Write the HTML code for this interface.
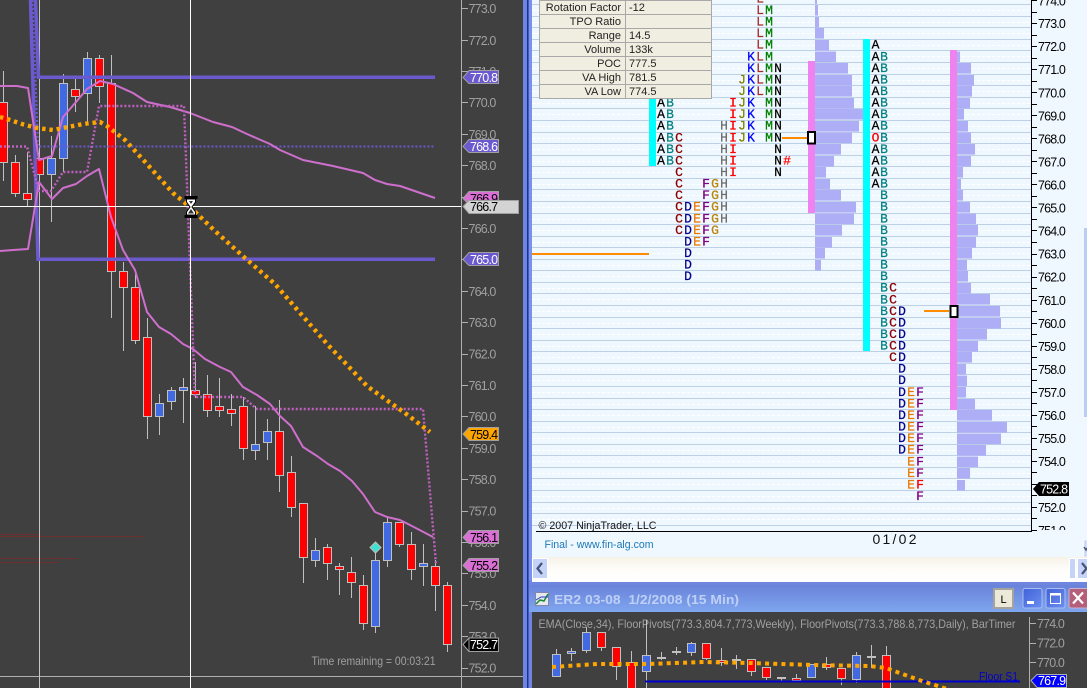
<!DOCTYPE html>
<html><head><meta charset="utf-8"><title>ER2 03-08 chart</title>
<style>
html,body{margin:0;padding:0;width:1087px;height:688px;overflow:hidden;background:#404040}
svg{display:block;position:absolute;left:0;top:0}
text{font-family:"Liberation Sans",sans-serif}
.ax{font-size:12.5px;fill:#a0a0a0;letter-spacing:-.85px}
.rx{font-size:12.5px;fill:#000;letter-spacing:-.85px}
.lb{font-size:12.5px;letter-spacing:-.8px}
.t{font-size:11px;fill:#222}
.m text{font-family:"Liberation Mono",monospace;font-size:13px;text-anchor:middle;font-weight:normal;stroke-width:.25px;paint-order:stroke}
</style></head><body>
<svg width="1087" height="688" viewBox="0 0 1087 688" xmlns="http://www.w3.org/2000/svg">
<defs><linearGradient id="tb" x1="0" y1="0" x2="0" y2="1"><stop offset="0" stop-color="#6a82da"/><stop offset="1" stop-color="#7fa6ee"/></linearGradient>
<linearGradient id="sb" x1="0" y1="0" x2="0" y2="1"><stop offset="0" stop-color="#f6f2e8"/><stop offset=".5" stop-color="#fdfcf8"/><stop offset="1" stop-color="#fff"/></linearGradient>
<linearGradient id="bt" x1="0" y1="0" x2="1" y2="1"><stop offset="0" stop-color="#3f62d8"/><stop offset="1" stop-color="#6d8ef0"/></linearGradient></defs>

<!-- LEFT CHART -->
<rect width="523" height="688" fill="#404040"/>
<g stroke="#6b3030" stroke-width="1" fill="none"><path d="M0 534.5H40M0 536.5H143M0 558.5H78M0 562.5H59"/></g>
<path d="M0 676.5H523M461.5 0V688" stroke="#b0b0b0" fill="none"/>
<path d="M39.5 0V688" stroke="#c8c8c8" fill="none"/>
<path stroke="#c0c0c0" fill="none" d="M3.5 71V181M15.5 155V197M27.5 152V206M51.5 136V222M63.5 74V172M75.5 79V112M87.5 52V123M99.5 55V103M111.5 55V318M123.5 262V351M135.5 270V344M147.5 318V439M159.5 394V435M171.5 387V410M183.5 378V423M195.5 362V398M207.5 375V417M219.5 378V417M231.5 394V426M243.5 397V460M255.5 406V460M267.5 419V460M279.5 400V492M291.5 456V517M303.5 503V583M315.5 538V567M327.5 544V580M339.5 563V595M351.5 557V598M363.5 575V630M375.5 552V633M387.5 516V567M399.5 522V547M411.5 532V580M423.5 544V586M435.5 560V611M447.5 582V652"/>
<path fill="#ff0000" stroke="#c0c0c0" d="M-.5 102.5h8V162.5h-8zM11.5 162.5h8V193.5h-8zM23.5 193.5h8V199.5h-8zM35.5 158.5h8V174.5h-8zM71.5 89.5h8V96.5h-8zM95.5 58.5h8V86.5h-8zM107.5 83.5h8V271.5h-8zM119.5 271.5h8V287.5h-8zM131.5 287.5h8V340.5h-8zM143.5 337.5h8V416.5h-8zM191.5 390.5h8V394.5h-8zM203.5 394.5h8V410.5h-8zM215.5 406.5h8V410.5h-8zM227.5 409.5h8V413.5h-8zM239.5 406.5h8V448.5h-8zM275.5 431.5h8V475.5h-8zM287.5 472.5h8V507.5h-8zM299.5 503.5h8V557.5h-8zM323.5 547.5h8V563.5h-8zM335.5 566.5h8V569.5h-8zM347.5 572.5h8V582.5h-8zM359.5 585.5h8V623.5h-8zM395.5 522.5h8V544.5h-8zM407.5 544.5h8V569.5h-8zM431.5 566.5h8V585.5h-8zM443.5 585.5h8V644.5h-8z"/>
<path fill="#4169e1" stroke="#c0c0c0" d="M47.5 158.5h8V174.5h-8zM59.5 83.5h8V158.5h-8zM83.5 58.5h8V93.5h-8zM155.5 403.5h8V416.5h-8zM167.5 390.5h8V401.5h-8zM179.5 387.5h8V390.5h-8zM251.5 444.5h8V450.5h-8zM263.5 431.5h8V442.5h-8zM311.5 550.5h8V560.5h-8zM371.5 560.5h8V626.5h-8zM383.5 522.5h8V560.5h-8zM419.5 563.5h8V566.5h-8z"/>
<path d="M375.5 542L381 547.5L375.5 553L370 547.5Z" fill="#40e0d0" stroke="#c0c0c0"/>
<!-- purple pivots -->
<g fill="none" stroke="#6a5acd">
<path stroke-width="3.5" d="M435 77.3H38.5L35.5 0M435 259.3H38L30.5 0"/>
<path stroke-width="2" stroke-dasharray="2 2" d="M32.5 0L38 146.5H435"/>
</g>
<!-- pink -->
<g fill="none" stroke="#cf6fcd" stroke-width="2" stroke-linejoin="round">
<path d="M0 86L17 86L28 88L39 160L52 156L63 117L76 102L87 89L100 81L113 84L133 93L147 102L170 107L190 113L213 122L232 127L247 134L270 144L280 150L303 160L333 166L363 173L375 180L387 184L400 186L435 198"/>
<path d="M0 251L13 250L28 249L39 182L52 199L63 188L76 184L87 176L99 169L111 217L123 250L135 270L147 312L159 327L171 334L183 344L193 349L205 359L220 367L231 372L243 387L257 395L270 404L280 416L291 426L303 447L317 456L328 464L340 471L352 481L363 494L375 512L387 517L400 520L410 525L433 537"/>
<path stroke="#c060c0" stroke-width="2.4" stroke-dasharray="2 2" d="M0 146.5H27L39 191H51L63 172H87L99 106H184L193 344L195 397H243L257 409H423L436 564"/>
</g>
<!-- EMA -->
<path fill="none" stroke="#ffa500" stroke-width="4.4" stroke-dasharray="3.4 3.9" d="M0 117L7 119L22 124L37 128L53 130L68 127L83 124L100 122L107 126L125 140L147 164L173 193L190 207L215 231L245 258L268 278L275 284L307 321L328 345L350 368L367 386L385 399L405 413L430 432"/>
<!-- crosshair -->
<path d="M0 206.5H461M190.5 0V688" stroke="#fff" fill="none"/>
<!-- hourglass -->
<g>
<rect x="184.5" y="196" width="13" height="3" fill="#000"/><rect x="184.5" y="215" width="13" height="3" fill="#000"/>
<path d="M186.5 199H195.5V202L192 207L195.5 212V215H186.5V212L190 207L186.5 202Z" fill="#fff" stroke="#000"/>
<path d="M188 213.5L191 209L194 213.5ZM189 201H193L191 204Z" fill="#333"/>
</g>
<!-- axis -->
<path stroke="#b0b0b0" fill="none" d="M461 8.5h7M461 40.5h7M461 71.5h7M461 102.5h7M461 134.5h7M461 165.5h7M461 197.5h7M461 228.5h7M461 259.5h7M461 291.5h7M461 322.5h7M461 354.5h7M461 385.5h7M461 416.5h7M461 448.5h7M461 479.5h7M461 511.5h7M461 542.5h7M461 573.5h7M461 605.5h7M461 636.5h7M461 668.5h7"/>
<g class="ax">
<text x="468.500" y="13">773.0</text><text x="468.500" y="45">772.0</text><text x="468.500" y="76">771.0</text><text x="468.500" y="107">770.0</text><text x="468.500" y="139">769.0</text><text x="468.500" y="170">768.0</text><text x="468.500" y="202">767.0</text><text x="468.500" y="233">766.0</text><text x="468.500" y="264">765.0</text><text x="468.500" y="296">764.0</text><text x="468.500" y="327">763.0</text><text x="468.500" y="358.500">762.0</text><text x="468.500" y="390">761.0</text><text x="468.500" y="421">760.0</text><text x="468.500" y="453">759.0</text><text x="468.500" y="484">758.0</text><text x="468.500" y="515.500">757.0</text><text x="468.500" y="547">756.0</text><text x="468.500" y="578">755.0</text><text x="468.500" y="610">754.0</text><text x="468.500" y="641">753.0</text><text x="468.500" y="672.500">752.0</text>
<text x="311.500" y="665" textLength="124" lengthAdjust="spacingAndGlyphs" style="font-size:12px;letter-spacing:0">Time remaining = 00:03:21</text>
</g>
<!-- labels -->
<g stroke="#a0a0a0" class="lb">
<path fill="#6a5acd" d="M463 77.500L469 70.500H498.500V83.500H469Z"/>
<path fill="#6a5acd" d="M463 146.500L469 139.500H498.500V152.500H469Z"/>
<path fill="#da70d6" d="M463 198.500L469 191.500H498.500V204.500H469Z"/>
<path fill="#d3d3d3" d="M463 206.500L469 200.500H518.500V213.500H469Z"/>
<path fill="#6a5acd" d="M463 259.500L469 252.500H498.500V265.500H469Z"/>
<path fill="#ffa500" d="M463 434L469 427.500H498.500V440.500H469Z"/>
<path fill="#da70d6" d="M463 537.500L469 530.500H498.500V543.500H469Z"/>
<path fill="#da70d6" d="M463 565.500L469 558.500H498.500V571.500H469Z"/>
<path fill="#000" d="M463 644.500L469 638V651.500V638H498.500V651.500H469Z"/>
</g>
<g class="lb">
<text x="470" y="82" fill="#fff">770.8</text><text x="470" y="151" fill="#fff">768.6</text>
<clipPath id="c1"><rect x="463" y="190" width="36" height="10"/></clipPath>
<text x="470" y="203" fill="#000" clip-path="url(#c1)">766.9</text>
<text x="470" y="211" fill="#000">766.7</text><text x="470" y="264" fill="#fff">765.0</text>
<text x="470" y="439" fill="#000">759.4</text><text x="470" y="542" fill="#000">756.1</text><text x="470" y="570" fill="#000">755.2</text><text x="470" y="649" fill="#fff">752.7</text>
</g>

<!-- WINDOW FRAME -->
<rect x="523" y="0" width="564" height="688" fill="#6f86e0"/>
<rect x="527" y="0" width="1.500" height="688" fill="#1c2f9c"/>
<rect x="529" y="0" width="3" height="580" fill="#7b92ea"/>
<!-- RIGHT CHART -->
<rect x="532" y="0" width="555" height="557" fill="#f0f8ff"/>
<path stroke="#fff" stroke-dasharray="3 2" fill="none" d="M532 10.500H1031M532 22.500H1031M532 33.500H1031M532 45.500H1031M532 56.500H1031M532 68.500H1031M532 80.500H1031M532 91.500H1031M532 103.500H1031M532 114.500H1031M532 126.500H1031M532 138.500H1031M532 149.500H1031M532 161.500H1031M532 172.500H1031M532 184.500H1031M532 195.500H1031M532 207.500H1031M532 219.500H1031M532 230.500H1031M532 242.500H1031M532 253.500H1031M532 265.500H1031M532 276.500H1031M532 288.500H1031M532 299.500H1031M532 311.500H1031M532 323.500H1031M532 334.500H1031M532 346.500H1031M532 357.500H1031M532 369.500H1031M532 380.500H1031M532 392.500H1031M532 404.500H1031M532 415.500H1031M532 427.500H1031M532 438.500H1031M532 450.500H1031M532 461.500H1031M532 473.500H1031M532 484.500H1031M532 496.500H1031M532 508.500H1031M532 519.500H1031"/>
<path stroke="#bdd0e6" fill="none" d="M532 4.500H1031M532 16.500H1031M532 27.500H1031M532 39.500H1031M532 50.500H1031M532 62.500H1031M532 74.500H1031M532 85.500H1031M532 97.500H1031M532 108.500H1031M532 120.500H1031M532 132.500H1031M532 143.500H1031M532 155.500H1031M532 166.500H1031M532 178.500H1031M532 189.500H1031M532 201.500H1031M532 213.500H1031M532 224.500H1031M532 236.500H1031M532 247.500H1031M532 259.500H1031M532 270.500H1031M532 282.500H1031M532 293.500H1031M532 305.500H1031M532 317.500H1031M532 328.500H1031M532 340.500H1031M532 351.500H1031M532 363.500H1031M532 374.500H1031M532 386.500H1031M532 398.500H1031M532 409.500H1031M532 421.500H1031M532 432.500H1031M532 444.500H1031M532 455.500H1031M532 467.500H1031M532 478.500H1031M532 490.500H1031M532 502.500H1031M532 513.500H1031M532 525.500H1031"/>
<!-- histogram 1 -->
<g fill="#aeaef6">
<path d="M815 0h2v4h-2zM815 5h3v10.600h-3zM815 17h4v10.600h-4zM815 28h9v10.600h-9zM815 40h14v10.600h-14zM815 51.500h21v10.600h-21zM815 63h33v10.600h-33zM815 75h37v10.600h-37zM815 86h37v10.600h-37zM815 98h39v10.600h-39zM815 109h48v10.600h-48zM815 121h44v10.600h-44zM815 132.500h37v10.600h-37zM815 144h26v10.600h-26zM815 156h19v10.600h-19zM815 167h11v10.600h-11zM815 179h15v10.600h-15zM815 190h26v10.600h-26zM815 202h41v10.600h-41zM815 213.500h39v10.600h-39zM815 225h27v10.600h-27zM815 237h17v10.600h-17zM815 248h10v10.600h-10zM815 260h6v10.600h-6z"/>
<path d="M957 51.500h3v10.600h-3zM957 63h14v10.600h-14zM957 75h17v10.600h-17zM957 86h15v10.600h-15zM957 98h13v10.600h-13zM957 109h7v10.600h-7zM957 121h11v10.600h-11zM957 132.500h14v10.600h-14zM957 144h18v10.600h-18zM957 156h14v10.600h-14zM957 167h6v10.600h-6zM957 179h4v10.600h-4zM957 190h6v10.600h-6zM957 202h13v10.600h-13zM957 213.500h19v10.600h-19zM957 225h21v10.600h-21zM957 237h19v10.600h-19zM957 248h15v10.600h-15zM957 260h10v10.600h-10zM957 271h11v10.600h-11zM957 283h14v10.600h-14zM957 294h33v10.600h-33zM957 306h43v10.600h-43zM957 318h44v10.600h-44zM957 329h30v10.600h-30zM957 341h21v10.600h-21zM957 352h15v10.600h-15zM957 364h9v10.600h-9zM957 375.500h10v10.600h-10zM957 387h9v10.600h-9zM957 399h18v10.600h-18zM957 410h35v10.600h-35zM957 422h50v10.600h-50zM957 433.500h44v10.600h-44zM957 445h29v10.600h-29zM957 456.500h21v10.600h-21zM957 468h13v10.600h-13zM957 480h8v10.600h-8z"/>
</g>
<rect x="649" y="90" width="7" height="76" fill="#00ffff"/>
<rect x="863" y="39" width="7" height="312" fill="#00ffff"/>
<rect x="808" y="61" width="7" height="152" fill="#ee82ee"/>
<rect x="950" y="50" width="7" height="360" fill="#ee82ee"/>
<path d="M532 254H649M782 138H807M924 311H949" stroke="#ff8c00" stroke-width="2" fill="none"/>
<rect x="808" y="132" width="7" height="11.500" fill="#fff" stroke="#000" stroke-width="2"/>
<rect x="950.500" y="306" width="7" height="11" fill="#fff" stroke="#000" stroke-width="2"/>
<!-- TPO letters chart 1 -->
<g class="m">
<text fill="#000" stroke="#000" x="661 661 661 661 661 661" y="106.600 118.100 129.700 141.300 152.900 164.400">AAAAAA</text>
<text fill="#008080" stroke="#008080" x="670 670 670 670 670 670" y="106.600 118.100 129.700 141.300 152.900 164.400">BBBBBB</text>
<text fill="#8b0000" stroke="#8b0000" x="679 679 679 679 679 679 679 679 679" y="141.300 152.900 164.400 176 187.600 199.200 210.700 222.300 233.800">CCCCCCCCC</text>
<text fill="#00008b" stroke="#00008b" x="688 688 688 688 688 688 688" y="210.700 222.300 233.800 245.400 257 268.500 280.100">DDDDDDD</text>
<text fill="#e87800" stroke="#e87800" x="697 697 697 697" y="210.700 222.300 233.800 245.400">EEEE</text>
<text fill="#800080" stroke="#800080" x="706 706 706 706 706 706" y="187.600 199.200 210.700 222.300 233.800 245.400">FFFFFF</text>
<text fill="#b8860b" stroke="#b8860b" x="715 715 715 715 715" y="187.600 199.200 210.700 222.300 233.800">GGGGG</text>
<text fill="#696969" stroke="#696969" x="724 724 724 724 724 724 724 724 724" y="129.700 141.300 152.900 164.400 176 187.600 199.200 210.700 222.300">HHHHHHHHH</text>
<text fill="#ff0000" stroke="#ff0000" x="733 733 733 733 733 733 733" y="106.600 118.100 129.700 141.300 152.900 164.400 176">IIIIIII</text>
<text fill="#808000" stroke="#808000" x="742 742 742 742 742 742" y="83.400 95 106.600 118.100 129.700 141.300">JJJJJJ</text>
<text fill="#0000ff" stroke="#0000ff" x="751 751 751 751 751 751 751 751" y="60.300 71.900 83.400 95 106.600 118.100 129.700 141.300">KKKKKKKK</text>
<text fill="#a52a2a" stroke="#a52a2a" x="760 760 760 760 760 760 760 760 760" y="2.400 14 25.600 37.100 48.700 60.300 71.900 83.400 95">LLLLLLLLL</text>
<text fill="#008000" stroke="#008000" x="769 769 769 769 769 769 769 769 769 769 769 769" y="14 25.600 37.100 48.700 60.300 71.900 83.400 95 106.600 118.100 129.700 141.300">MMMMMMMMMMMM</text>
<text fill="#000" stroke="#000" x="778 778 778 778 778 778 778 778 778 778" y="71.900 83.400 95 106.600 118.100 129.700 141.300 152.900 164.400 176">NNNNNNNNNN</text>
<text fill="#ff0000" stroke="#ff0000" x="787" y="164.400">#</text>
<!-- chart 2 -->
<text fill="#000" stroke="#000" x="875.500 875.500 875.500 875.500 875.500 875.500 875.500 875.500 875.500 875.500 875.500 875.500" y="48.700 60.300 71.900 83.400 95 106.600 118.100 129.700 152.900 164.400 176 187.600">AAAAAAAAAAAA</text>
<text fill="#ff0000" stroke="#ff0000" x="875.500" y="141.300">O</text>
<text fill="#008080" stroke="#008080" x="884 884 884 884 884 884 884 884 884 884 884 884 884 884 884 884 884 884 884 884 884 884 884 884 884 884" y="60.300 71.900 83.400 95 106.600 118.100 129.700 141.300 152.900 164.400 176 187.600 199.200 210.700 222.300 233.800 245.400 257 268.500 280.100 291.700 303.300 314.800 326.400 338 349.500">BBBBBBBBBBBBBBBBBBBBBBBBBB</text>
<text fill="#8b0000" stroke="#8b0000" x="893 893 893 893 893 893 893" y="291.700 303.300 314.800 326.400 338 349.500 361.100">CCCCCCC</text>
<text fill="#00008b" stroke="#00008b" x="902 902 902 902 902 902 902 902 902 902 902 902 902" y="314.800 326.400 338 349.500 361.100 372.700 384.200 395.800 407.400 419 430.500 442.100 453.700">DDDDDDDDDDDDD</text>
<text fill="#e87800" stroke="#e87800" x="911 911 911 911 911 911 911 911 911" y="395.800 407.400 419 430.500 442.100 453.700 465.300 476.800 488.400">EEEEEEEEE</text>
<text fill="#800080" stroke="#800080" x="920 920 920 920 920 920 920 920 920" y="395.800 407.400 419 430.500 442.100 453.700 465.300 476.800 500">FFFFFFFFF</text>
<text fill="#ff0000" stroke="#ff0000" x="920" y="488.400">F</text>
</g>
<!-- right axis -->
<path stroke="#000" fill="none" d="M1031.500 0V531M536 531.500H1032M1031 .5h6M1031 12.500h6M1031 23.500h6M1031 35.500h6M1031 46.500h6M1031 58.500h6M1031 69.500h6M1031 81.500h6M1031 92.500h6M1031 104.500h6M1031 115.500h6M1031 127.500h6M1031 138.500h6M1031 150.500h6M1031 161.500h6M1031 173.500h6M1031 184.500h6M1031 196.500h6M1031 207.500h6M1031 219.500h6M1031 230.500h6M1031 242.500h6M1031 254.500h6M1031 265.500h6M1031 277.500h6M1031 288.500h6M1031 300.500h6M1031 311.500h6M1031 323.500h6M1031 334.500h6M1031 346.500h6M1031 357.500h6M1031 369.500h6M1031 380.500h6M1031 392.500h6M1031 403.500h6M1031 415.500h6M1031 426.500h6M1031 438.500h6M1031 449.500h6M1031 461.500h6M1031 472.500h6M1031 484.500h6M1031 495.500h6M1031 507.500h6M1031 518.500h6M1031 530.500h6"/>
<clipPath id="c2"><rect x="1032" y="0" width="50" height="530"/></clipPath>
<g class="rx" clip-path="url(#c2)">
<text x="1038" y="5.500">774.0</text><text x="1038" y="28">773.0</text><text x="1038" y="51">772.0</text><text x="1038" y="74">771.0</text><text x="1038" y="97.500">770.0</text><text x="1038" y="120.500">769.0</text><text x="1038" y="143.500">768.0</text><text x="1038" y="166.500">767.0</text><text x="1038" y="189.500">766.0</text><text x="1038" y="212.500">765.0</text><text x="1038" y="235.500">764.0</text><text x="1038" y="258.500">763.0</text><text x="1038" y="281.500">762.0</text><text x="1038" y="305">761.0</text><text x="1038" y="328">760.0</text><text x="1038" y="351">759.0</text><text x="1038" y="374">758.0</text><text x="1038" y="397">757.0</text><text x="1038" y="420">756.0</text><text x="1038" y="443">755.0</text><text x="1038" y="466">754.0</text><text x="1038" y="512">752.0</text><text x="1038" y="535">751.0</text>
</g>
<path fill="#000" d="M1033 489L1039 482H1069V496H1039Z"/><text class="lb" x="1040" y="493.500" fill="#fff">752.8</text>
<!-- table -->
<g>
<rect x="539.500" y=".5" width="172" height="98" fill="#f0eee0" stroke="#a8a8a8"/>
<path stroke="#a8a8a8" fill="none" d="M539.500 14.500H711.500M539.500 28.500H711.500M539.500 42.500H711.500M539.500 56.500H711.500M539.500 70.500H711.500M539.500 84.500H711.500M625.500 0V98"/>
<g class="t" text-anchor="end">
<text x="621" y="11">Rotation Factor</text><text x="621" y="25">TPO Ratio</text><text x="621" y="39">Range</text><text x="621" y="53">Volume</text><text x="621" y="67">POC</text><text x="621" y="81">VA High</text><text x="621" y="95">VA Low</text>
</g>
<g class="t">
<text x="629" y="11">-12</text><text x="629" y="39">14.5</text><text x="629" y="53">133k</text><text x="629" y="67">777.5</text><text x="629" y="81">781.5</text><text x="629" y="95">774.5</text>
</g>
</g>
<!-- footer chart text -->
<text x="538.500" y="529" font-size="11" fill="#111" textLength="118" lengthAdjust="spacingAndGlyphs">© 2007 NinjaTrader, LLC</text>
<text x="544.500" y="548" font-size="11" fill="#1a78b8" textLength="109" lengthAdjust="spacingAndGlyphs">Final - www.fin-alg.com</text>
<text x="872.500" y="544" font-size="14" fill="#111" textLength="44">01/02</text>
<!-- vertical scroll -->
<rect x="1084" y="228" width="3" height="189" fill="#bccdf5"/>
<path d="M1084 540h3v17h-3z" fill="#c6d5f8" stroke="#fff" stroke-width=".5"/>
<path d="M1084 547L1086 550L1087 548" stroke="#44557a" stroke-width="1.500" fill="none"/>
<!-- horizontal scroll -->
<rect x="532" y="557" width="555" height="23" fill="url(#sb)"/>
<rect x="532.500" y="558.500" width="15" height="20" fill="#c4d3f7" stroke="#fff"/>
<path d="M542 563L537.500 568.500L542 574" stroke="#44557a" stroke-width="2.200" fill="none"/>
<rect x="1069.500" y="558.500" width="6" height="20" fill="#c4d3f7" stroke="#fff"/>
<rect x="1077.500" y="558.500" width="10" height="20" fill="#c4d3f7" stroke="#fff"/>
<path d="M1082 563L1086.500 568.500L1082 574" stroke="#44557a" stroke-width="2.200" fill="none"/>
<rect x="532" y="580" width="555" height="2" fill="#fff"/>

<!-- BOTTOM WINDOW -->
<rect x="523" y="582" width="564" height="106" fill="#6f86e0"/>
<rect x="527" y="582" width="1.500" height="106" fill="#1c2f9c"/>
<rect x="529" y="585" width="558" height="27" fill="url(#tb)"/>
<g>
<rect x="535.500" y="592.500" width="13" height="13" fill="#e8e8f0" stroke="#8088a8"/>
<path d="M536 604L540 600L544 601L548 594" stroke="#1a8a30" stroke-width="1.500" fill="none"/>
<path d="M536 600L541 597L548 597" stroke="#2040c0" fill="none"/>
</g>
<text x="554" y="604" font-size="13" font-weight="bold" fill="#bed0f6" xml:space="preserve" textLength="185" lengthAdjust="spacingAndGlyphs">ER2 03-08  1/2/2008 (15 Min)</text>
<rect x="994" y="589" width="19" height="19" fill="#ece9d8" stroke="#a4a49c" stroke-width="2"/>
<text x="1003.500" y="603" font-size="11" fill="#000" text-anchor="middle">L</text>
<rect x="1023" y="588.500" width="19" height="19.500" rx="2" fill="url(#bt)" stroke="#a8bdf5"/>
<rect x="1027" y="601" width="7" height="3" fill="#fff"/>
<rect x="1046" y="588.500" width="19" height="19.500" rx="2" fill="url(#bt)" stroke="#a8bdf5"/>
<rect x="1050.500" y="593.500" width="10" height="10" fill="none" stroke="#fff"/><path d="M1050 594.500h11" stroke="#fff" stroke-width="2"/>
<rect x="1069" y="588.500" width="20" height="19.500" rx="2" fill="#b5607a" stroke="#c8b0d0"/>
<path d="M1073 592.500L1083 603.500M1083 592.500L1073 603.500" stroke="#fff" stroke-width="2.200"/>
<!-- bottom chart -->
<rect x="532" y="612" width="555" height="76" fill="#404040"/>
<text x="538.500" y="628" font-size="12" fill="#a0a0a0" textLength="477" lengthAdjust="spacingAndGlyphs">EMA(Close,34), FloorPivots(773.3,804.7,773,Weekly), FloorPivots(773.3,788.8,773,Daily), BarTimer</text>
<path stroke="#c0c0c0" fill="none" d="M556.500 649V677M571.500 648V661M586.500 627V653M601.500 632V651M616.500 647V680M631.500 651V688M646.500 620V688M661.500 652V660M676.500 647V655M691.500 642V656M706.500 643V660M721.500 648V666M736.500 655V669M751.500 659V676M766.500 667V680M781.500 677V681M796.500 674V681M811.500 664V678M826.500 657V670M841.500 668V685M856.500 652V683M871.500 645V668M886.500 646V688"/>
<path fill="#ff0000" stroke="#c0c0c0" d="M597.500 632.500h8V647.500h-8zM612.500 647.500h8V666.500h-8zM627.500 662.500h8V690h-8zM702.500 643.500h8V658.500h-8zM717.500 660.500h8V662.500h-8zM747.500 659.500h8V671.500h-8zM762.500 667.500h8V677.500h-8zM792.500 678.500h8V680.500h-8zM822.500 664.500h8V667.500h-8zM837.500 668.500h8V678.500h-8zM882.500 655.500h8V690h-8z"/>
<path fill="#4169e1" stroke="#c0c0c0" d="M552.500 654.500h8V676.500h-8zM567.500 651.500h8V653.500h-8zM582.500 632.500h8V650.500h-8zM642.500 655.500h8V671.500h-8zM687.500 643.500h8V652.500h-8zM807.500 664.500h8V677.500h-8zM852.500 655.500h8V679.500h-8z"/>
<path stroke="#c0c0c0" fill="none" stroke-width="2" d="M657 658h9M672 652h9M732 660h9M777 678h9M867 657h9"/>
<path d="M645 681.500H1020" stroke="#0000cd" stroke-width="2" fill="none"/>
<path fill="none" stroke="#ffa500" stroke-width="4" stroke-dasharray="4 4.200" d="M552 667L597 664L647 664L704 662L751 663L812 665L869 666L886 668L919 680L950 690"/>
<text x="979" y="680.500" font-size="12" fill="#0000cd" textLength="39" lengthAdjust="spacingAndGlyphs">Floor S1</text>
<path d="M1029.500 617V688" stroke="#b0b0b0" fill="none"/>
<path d="M1030 623.500h6M1030 643.500h6M1030 662.500h6" stroke="#b0b0b0" fill="none"/>
<g class="ax"><text x="1037" y="628">774.0</text><text x="1037" y="647.500">772.0</text><text x="1037" y="667">770.0</text></g>
<path fill="#0000ff" stroke="#b0b0b0" d="M1031 680.500L1037 674.500H1066.500V687.500H1037Z"/>
<text class="lb" x="1038" y="685" fill="#fff">767.9</text>
</svg>
</body></html>
